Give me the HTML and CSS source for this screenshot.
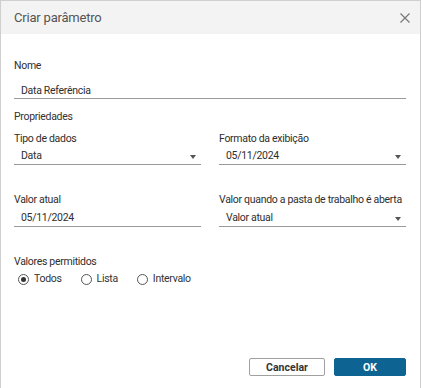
FILE: index.html
```html
<!DOCTYPE html>
<html lang="pt">
<head>
    <meta charset="UTF-8">
    <title>Criar parâmetro</title>
    <link rel="stylesheet" href="styles.css">
</head>
<body>
<div class="dialog">
    <div class="header">
        <span class="title">Criar parâmetro</span>
        <svg class="close" width="10" height="10" viewBox="0 0 10 10">
            <path d="M0.5 0.5 L9.5 9.5 M9.5 0.5 L0.5 9.5" stroke="#777" stroke-width="1.2" fill="none"/>
        </svg>
    </div>

    <div class="content">
        <label class="label name-label">Nome</label>
        <div class="control name-input">Data Referência</div>

        <div class="section-title">Propriedades</div>

        <div class="row first-row">
            <div class="field">
                <label class="label">Tipo de dados</label>
                <div class="control select">Data <span class="arrow"></span></div>
            </div>
            <div class="field">
                <label class="label">Formato da exibição</label>
                <div class="control select">05/11/2024 <span class="arrow"></span></div>
            </div>
        </div>

        <div class="row second-row">
            <div class="field">
                <label class="label">Valor atual</label>
                <div class="control">05/11/2024</div>
            </div>
            <div class="field">
                <label class="label">Valor quando a pasta de trabalho é aberta</label>
                <div class="control select">Valor atual <span class="arrow"></span></div>
            </div>
        </div>

        <div class="label allowed-label">Valores permitidos</div>
        <div class="radios">
            <span class="radio checked"><span class="circle"></span>Todos</span>
            <span class="radio"><span class="circle"></span>Lista</span>
            <span class="radio"><span class="circle"></span>Intervalo</span>
        </div>
    </div>

    <div class="footer">
        <button class="btn btn-cancel">Cancelar</button>
        <button class="btn btn-ok">OK</button>
    </div>
</div>
</body>
</html>
```

FILE: styles.css
```css
body {
    margin: 0;
    font-family: Roboto, 'Liberation Sans', sans-serif;
    color: #333;
    background: #fff;
    letter-spacing: -0.3px;
}

.dialog {
    width: 421px;
    height: 388px;
    box-sizing: border-box;
    border: 1px solid #cfcfcf;
    border-bottom: none;
    display: flex;
    flex-direction: column;
}

/* Cabecera gris */
.header {
    height: 33px;
    background: #f3f3f3;
    display: flex;
    align-items: center;
    justify-content: space-between;
    padding: 0 10px 0 13px;
}

.title {
    font-size: 13px;
    color: #555;
    letter-spacing: -0.2px;
}

.close {
    margin-top: 1px;
}

.content {
    padding: 0 14px 0 13px;
    display: flex;
    flex-direction: column;
}

.label {
    display: block;
    font-size: 10.5px;
    line-height: 14px;
    color: #2e2e2e;
    white-space: nowrap;
}

.name-label {
    margin-top: 25px;
}

.control {
    position: relative;
    height: 16px;
    line-height: 16px;
    padding-top: 1px;
    border-bottom: 1px solid #999;
    padding-left: 7px;
    font-size: 10.5px;
    color: #2e2e2e;
    white-space: nowrap;
}

.name-input {
    margin-top: 8px;
    height: 15px;
    padding-top: 2px;
}

.section-title {
    margin-top: 11px;
    font-size: 10.5px;
    line-height: 14px;
}

.row {
    display: grid;
    grid-template-columns: 187px 187px;
    column-gap: 18px;
}

.first-row {
    margin-top: 8px;
}

    .first-row .control {
        margin-top: 1px;
    }

.second-row {
    margin-top: 28px;
}

    .second-row .control {
        margin-top: 2px;
    }

/* Flecha del desplegable */
.arrow {
    position: absolute;
    right: 5px;
    top: 8px;
    width: 0;
    height: 0;
    border-left: 3px solid transparent;
    border-right: 3px solid transparent;
    border-top: 4px solid #555;
}

.allowed-label {
    margin-top: 28px;
}

.radios {
    margin-top: 3px;
    display: flex;
    gap: 19px;
    padding-left: 4px;
    font-size: 10.5px;
    line-height: 14px;
}

.radio {
    display: flex;
    align-items: center;
    gap: 5px;
}

.circle {
    width: 9px;
    height: 9px;
    border: 1px solid #555;
    border-radius: 50%;
    display: flex;
    align-items: center;
    justify-content: center;
}

.radio.checked .circle::after {
    content: '';
    width: 5px;
    height: 5px;
    border-radius: 50%;
    background: #333;
}

.footer {
    margin-top: auto;
    padding: 0 14px 12px 0;
    display: flex;
    justify-content: flex-end;
    gap: 9px;
}

.btn {
    height: 18px;
    font-family: Roboto, 'Liberation Sans', sans-serif;
    font-size: 10.5px;
    font-weight: bold;
    border-radius: 2px;
    padding: 0;
    cursor: pointer;
}

.btn-cancel {
    width: 76px;
    background: #fff;
    border: 1px solid #a0a0a0;
    color: #333;
}

.btn-ok {
    width: 72px;
    background: #0d6493;
    border: 1px solid #0d6493;
    color: #fff;
}
```
